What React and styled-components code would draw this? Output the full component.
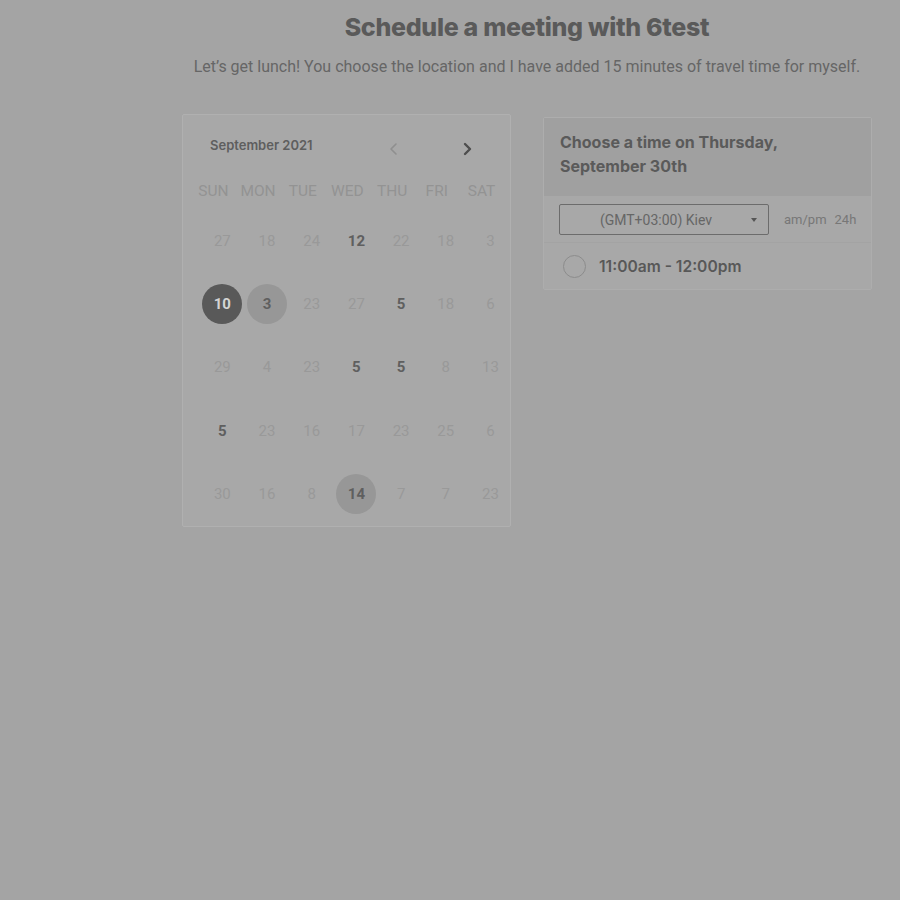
import React from 'react';
import styled, {createGlobalStyle} from 'styled-components';

const GlobalStyle = createGlobalStyle`
  html, body {
    margin: 0;
    padding: 0;
    background: #a4a4a4;
  }
  body {
    font-family: Roboto, "Liberation Sans", sans-serif;
  }
`;

const Page = styled.main`
  width: 900px;
  height: 900px;
  box-sizing: border-box;
  padding: 12px 28px 0 182px;
  overflow: hidden;
`;

const Head = styled.header`
  width: 690px;
  text-align: center;
`;

const Title = styled.h1`
  margin: 0;
  font-family: Inter, "Liberation Sans", sans-serif;
  font-weight: 800;
  font-size: 25px;
  line-height: 30px;
  letter-spacing: -0.3px;
  color: #5a5a5a;
`;

const Subtitle = styled.p`
  margin: 15px 0 0;
  font-size: 16px;
  line-height: 20px;
  color: #666;
`;

const Columns = styled.div`
  display: flex;
  gap: 32px;
  margin-top: 37px;
  align-items: flex-start;
`;

const CalendarCard = styled.section`
  width: 329px;
  height: 413px;
  box-sizing: border-box;
  background: #a8a8a8;
  border: 1px solid #b0b0b0;
  border-radius: 2px;
`;

const MonthBar = styled.div`
  display: flex;
  align-items: center;
  height: 30px;
  margin-top: 15px;
  padding-left: 27px;
`;

const MonthLabel = styled.span`
  font-family: Inter, "Liberation Sans", sans-serif;
  font-weight: 600;
  font-size: 13px;
  color: #5e5e5e;
  width: 172px;
`;

const Arrow = styled.button`
  border: none;
  background: none;
  padding: 0;
  width: 24px;
  height: 24px;
  display: flex;
  align-items: center;
  justify-content: center;
  margin-top: 8px;
  margin-right: ${p => p.$gap || 0}px;
  color: ${p => (p.$muted ? '#8f8f8f' : '#4e4e4e')};
`;

const WeekRow = styled.div`
  display: grid;
  grid-template-columns: repeat(7, 44.7px);
  padding-left: 8px;
  margin-top: 21px;
`;

const WeekDay = styled.span`
  text-align: center;
  font-size: 15.5px;
  line-height: 20px;
  color: #939393;
`;

const DateGrid = styled.div`
  display: grid;
  grid-template-columns: repeat(7, 44.7px);
  grid-auto-rows: 63.3px;
  padding-left: 17px;
  margin-top: 8px;
`;

const DateCell = styled.div`
  display: flex;
  align-items: center;
  justify-content: center;
`;

const Day = styled.span`
  width: 40px;
  height: 40px;
  border-radius: 50%;
  display: flex;
  align-items: center;
  justify-content: center;
  font-size: 15px;
  font-weight: ${p => (p.$kind === 'off' ? 400 : 700)};
  color: ${p =>
    p.$kind === 'selected' ? '#d4d4d4' : p.$kind === 'off' ? '#999' : '#5f5f5f'};
  background: ${p =>
    p.$kind === 'selected' ? '#595959' : p.$kind === 'available' ? '#979797' : 'transparent'};
`;

const TimeCard = styled.section`
  width: 329px;
  margin-top: 3px;
  box-sizing: border-box;
  background: #a8a8a8;
  border: 1px solid #adadad;
  border-radius: 2px;
`;

const TimeHeader = styled.div`
  background: #a0a0a0;
  padding: 12px 16px 18px;
  font-family: Inter, "Liberation Sans", sans-serif;
  font-weight: 700;
  font-size: 16px;
  line-height: 24px;
  color: #5a5a5a;
`;

const ZoneRow = styled.div`
  display: flex;
  align-items: center;
  padding: 8px 0 7px 15px;
  border-bottom: 1px solid #a3a3a3;
`;

const ZoneSelect = styled.div`
  position: relative;
  width: 210px;
  height: 31px;
  box-sizing: border-box;
  border: 1px solid #6c6c6c;
  border-radius: 2px;
  display: flex;
  align-items: center;
  justify-content: center;
  font-size: 14px;
  color: #666;
  padding-right: 16px;
`;

const Caret = styled.span`
  position: absolute;
  right: 11px;
  top: 13px;
  border-left: 3.5px solid transparent;
  border-right: 3.5px solid transparent;
  border-top: 4px solid #555;
`;

const FormatToggle = styled.div`
  display: flex;
  gap: 8px;
  margin-left: 15px;
  font-size: 13px;
  color: #777;
`;

const Slot = styled.label`
  display: flex;
  align-items: center;
  gap: 13px;
  height: 46px;
  padding-left: 19px;
  font-family: Inter, "Liberation Sans", sans-serif;
  font-weight: 600;
  font-size: 15.6px;
  color: #585858;
`;

const Radio = styled.span`
  width: 23px;
  height: 23px;
  border-radius: 50%;
  border: 1.5px solid #8c8c8c;
  box-sizing: border-box;
`;

const WEEKDAYS = ['SUN', 'MON', 'TUE', 'WED', 'THU', 'FRI', 'SAT'];

// o = off, a = available (bold), s = selected, c = circled available
const WEEKS = [
  [['27', 'o'], ['18', 'o'], ['24', 'o'], ['12', 'a'], ['22', 'o'], ['18', 'o'], ['3', 'o']],
  [['10', 's'], ['3', 'c'], ['23', 'o'], ['27', 'o'], ['5', 'a'], ['18', 'o'], ['6', 'o']],
  [['29', 'o'], ['4', 'o'], ['23', 'o'], ['5', 'a'], ['5', 'a'], ['8', 'o'], ['13', 'o']],
  [['5', 'a'], ['23', 'o'], ['16', 'o'], ['17', 'o'], ['23', 'o'], ['25', 'o'], ['6', 'o']],
  [['30', 'o'], ['16', 'o'], ['8', 'o'], ['14', 'c'], ['7', 'o'], ['7', 'o'], ['23', 'o']],
];

const KIND = {o: 'off', a: 'bold', s: 'selected', c: 'available'};

const Chevron = ({dir}) => (
  <svg width="10" height="14" viewBox="0 0 10 14" fill="none" stroke="currentColor"
       strokeWidth={dir === 'left' ? 1.6 : 2.4} strokeLinecap="round" strokeLinejoin="round">
    <path d={dir === 'left' ? 'M7 2L2 7l5 5' : 'M3 2l5 5-5 5'} />
  </svg>
);

const App = () => (
  <Page>
    <GlobalStyle />
    <Head>
      <Title>Schedule a meeting with 6test</Title>
      <Subtitle>Let’s get lunch! You choose the location and I have added 15 minutes of travel time for myself.</Subtitle>
    </Head>

    <Columns>
      <CalendarCard>
        <MonthBar>
          <MonthLabel>September 2021</MonthLabel>
          <Arrow $muted $gap={49}><Chevron dir="left" /></Arrow>
          <Arrow><Chevron dir="right" /></Arrow>
        </MonthBar>
        <WeekRow>
          {WEEKDAYS.map(d => <WeekDay key={d}>{d}</WeekDay>)}
        </WeekRow>
        <DateGrid>
          {WEEKS.flat().map(([n, k], i) => (
            <DateCell key={i}>
              <Day $kind={KIND[k]}>{n}</Day>
            </DateCell>
          ))}
        </DateGrid>
      </CalendarCard>

      <TimeCard>
        <TimeHeader>Choose a time on Thursday,<br />September 30th</TimeHeader>
        <ZoneRow>
          <ZoneSelect>
            (GMT+03:00) Kiev
            <Caret />
          </ZoneSelect>
          <FormatToggle>
            <span>am/pm</span>
            <span>24h</span>
          </FormatToggle>
        </ZoneRow>
        <Slot>
          <Radio />
          11:00am - 12:00pm
        </Slot>
      </TimeCard>
    </Columns>
  </Page>
);

export default App;
